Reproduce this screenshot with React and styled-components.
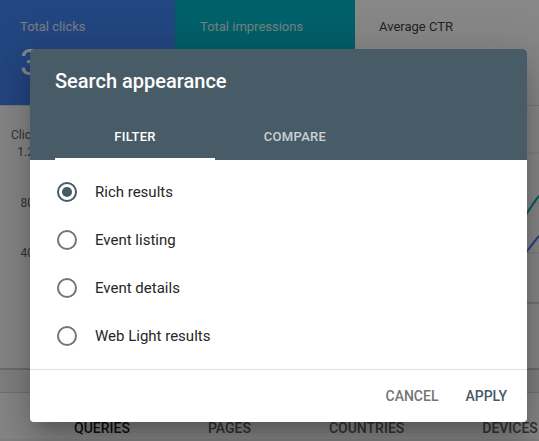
import { useState } from 'react';
import styled, { createGlobalStyle } from 'styled-components';

const GlobalStyle = createGlobalStyle`
  html, body {
    margin: 0;
    padding: 0;
    width: 539px;
    height: 441px;
    overflow: hidden;
    font-family: Roboto, "Liberation Sans", Arial, sans-serif;
  }
`;

const Page = styled.div`
  position: relative;
  width: 539px;
  height: 441px;
  background: #f4f4f4;
  overflow: hidden;
`;

const Scorecards = styled.div`
  display: grid;
  grid-template-columns: 175px 180px 1fr;
  height: 105px;
`;

const Scorecard = styled.div`
  background: ${({ $bg }) => $bg};
  color: ${({ $fg }) => $fg};
  padding: 18px 20px 0 ${({ $inset }) => $inset}px;
  box-sizing: border-box;
`;

const CardLabel = styled.div`
  font-size: 13px;
  line-height: 18px;
  opacity: 0.85;
`;

const CardValue = styled.div`
  font-size: 36px;
  line-height: 42px;
  margin-top: 6px;
`;

const ChartCard = styled.div`
  background: #ffffff;
  height: 265px;
  border-top: 1px solid #e0e0e0;
  border-bottom: 2px solid #cfcfcf;
  display: flex;
  padding-top: 22px;
  box-sizing: border-box;
`;

const Axis = styled.div`
  width: 34px;
  display: flex;
  flex-direction: column;
  align-items: flex-end;
  font-size: 12px;
  color: #5f6368;
`;

const AxisTitle = styled.div`
  align-self: flex-start;
  padding-left: 11px;
  line-height: 14px;
`;

const Tick = styled.div`
  line-height: 14px;
  margin-top: ${({ $gap }) => $gap}px;
`;

const Plot = styled.svg`
  flex: 1;
  height: 240px;
`;

const Spacer = styled.div`
  height: 22px;
  border-bottom: 1px solid #d6d6d6;
`;

const ReportTabs = styled.div`
  display: flex;
  background: #ffffff;
  padding-left: 35px;
  height: 46px;
`;

const ReportTab = styled.div`
  padding: 27px 39px 0;
  font-size: 14px;
  line-height: 16px;
  font-weight: 500;
  white-space: nowrap;
  color: ${({ $active }) => ($active ? '#202124' : '#5f6368')};
`;

const Overlay = styled.div`
  position: absolute;
  inset: 0;
  background: rgba(0, 0, 0, 0.47);
  padding: 49px 0 0 30px;
  box-sizing: border-box;
`;

const Dialog = styled.div`
  width: 497px;
  background: #ffffff;
  border-radius: 4px;
  overflow: hidden;
  box-shadow: 0 11px 15px -7px rgba(0, 0, 0, 0.2), 0 24px 38px 3px rgba(0, 0, 0, 0.14),
    0 9px 46px 8px rgba(0, 0, 0, 0.12);
`;

const Header = styled.div`
  background: #485c67;
  padding: 20px 25px 0;
`;

const Title = styled.h2`
  margin: 0;
  font-size: 20px;
  line-height: 24px;
  font-weight: 500;
  color: #ffffff;
`;

const Tabs = styled.div`
  display: flex;
  margin-top: 19px;
`;

const Tab = styled.div`
  position: relative;
  width: 160px;
  height: 48px;
  display: flex;
  align-items: center;
  justify-content: center;
  font-size: 13px;
  font-weight: 500;
  letter-spacing: 0.3px;
  color: ${({ $active }) => ($active ? '#ffffff' : 'rgba(255,255,255,0.72)')};
  cursor: pointer;

  &::after {
    content: '';
    position: absolute;
    left: 0;
    right: 0;
    bottom: 0;
    height: 2px;
    background: ${({ $active }) => ($active ? '#ffffff' : 'transparent')};
  }
`;

const Options = styled.div`
  padding: 8px 0 9px;
  border-bottom: 1px solid #e0e0e0;
`;

const Option = styled.label`
  display: flex;
  align-items: center;
  height: 48px;
  padding-left: 27px;
  cursor: pointer;
`;

const Radio = styled.span`
  width: 20px;
  height: 20px;
  box-sizing: border-box;
  border-radius: 50%;
  border: 2px solid ${({ $checked }) => ($checked ? '#455a64' : '#757575')};
  display: flex;
  align-items: center;
  justify-content: center;

  &::after {
    content: '';
    width: 10px;
    height: 10px;
    border-radius: 50%;
    background: ${({ $checked }) => ($checked ? '#455a64' : 'transparent')};
  }
`;

const OptionText = styled.span`
  margin-left: 18px;
  font-size: 15px;
  color: #262626;
`;

const Footer = styled.div`
  display: flex;
  justify-content: flex-end;
  gap: 11px;
  padding: 8px 12px;
`;

const Button = styled.button`
  height: 36px;
  padding: 0 8px;
  border: none;
  background: transparent;
  font-family: inherit;
  font-size: 14px;
  font-weight: 500;
  color: ${({ $primary }) => ($primary ? '#455a64' : '#757575')};
  cursor: pointer;
`;

const OPTIONS = ['Rich results', 'Event listing', 'Event details', 'Web Light results'];

const App = () => {
  const [tab, setTab] = useState('FILTER');
  const [selected, setSelected] = useState(0);

  return (
    <Page>
      <GlobalStyle />
      <Scorecards>
        <Scorecard $bg="#4285f4" $fg="#ffffff" $inset={20}>
          <CardLabel>Total clicks</CardLabel>
          <CardValue>3</CardValue>
        </Scorecard>
        <Scorecard $bg="#00b5c6" $fg="#ffffff" $inset={25}>
          <CardLabel>Total impressions</CardLabel>
          <CardValue>&nbsp;</CardValue>
        </Scorecard>
        <Scorecard $bg="#ffffff" $fg="#202124" $inset={24}>
          <CardLabel>Average CTR</CardLabel>
        </Scorecard>
      </Scorecards>
      <ChartCard>
        <Axis>
          <AxisTitle>Clicks</AxisTitle>
          <Tick $gap={3}>1.2</Tick>
          <Tick $gap={37}>80</Tick>
          <Tick $gap={36}>40</Tick>
        </Axis>
        <Plot viewBox="0 0 505 240" preserveAspectRatio="none">
          <g stroke="#e3e3e3" strokeWidth="1">
            <line x1="0" y1="25" x2="505" y2="25" />
            <line x1="0" y1="75" x2="505" y2="75" />
            <line x1="0" y1="125" x2="505" y2="125" />
          </g>
          <line x1="0" y1="175" x2="505" y2="175" stroke="#bdbdbd" strokeWidth="1" />
          <path d="M470 120 C485 100, 495 80, 505 68" fill="none" stroke="#00acc1" strokeWidth="2" />
          <path d="M470 150 C485 135, 495 120, 505 108" fill="none" stroke="#4285f4" strokeWidth="2" />
        </Plot>
      </ChartCard>
      <Spacer />
      <ReportTabs>
        <ReportTab $active>QUERIES</ReportTab>
        <ReportTab>PAGES</ReportTab>
        <ReportTab>COUNTRIES</ReportTab>
        <ReportTab>DEVICES</ReportTab>
      </ReportTabs>

      <Overlay>
        <Dialog>
          <Header>
            <Title>Search appearance</Title>
            <Tabs>
              {['FILTER', 'COMPARE'].map((t) => (
                <Tab key={t} $active={tab === t} onClick={() => setTab(t)}>
                  {t}
                </Tab>
              ))}
            </Tabs>
          </Header>
          <Options>
            {OPTIONS.map((o, i) => (
              <Option key={o} onClick={() => setSelected(i)}>
                <Radio $checked={selected === i} />
                <OptionText>{o}</OptionText>
              </Option>
            ))}
          </Options>
          <Footer>
            <Button>CANCEL</Button>
            <Button $primary>APPLY</Button>
          </Footer>
        </Dialog>
      </Overlay>
    </Page>
  );
};

export default App;
